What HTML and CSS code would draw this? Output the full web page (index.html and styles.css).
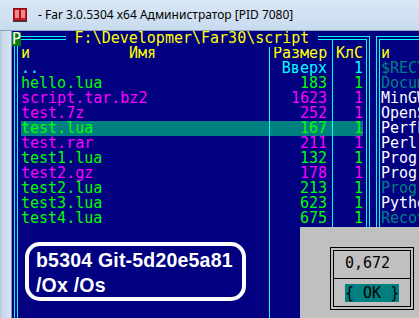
FILE: index.html
```html
<!DOCTYPE html>
<html>
<head>
<meta charset="utf-8">
<link rel="stylesheet" href="styles.css">
</head>
<body>
<div class="window">
  <div class="titlebar">
    <svg class="app-icon" width="14" height="14" viewBox="0 0 14 14">
      <rect x="0.5" y="0.5" width="13" height="12" fill="#d4151b" stroke="#8a0a0e"/>
      <rect x="0" y="12" width="14" height="2" fill="#5a2a2a"/>
      <path d="M2 3h4M2 5h4M2 7h4M2 9h4M8 3h4M8 5h4M8 7h4M8 9h4" stroke="#fff" stroke-width="1"/>
      <path d="M7 1v11" stroke="#8a0a0e"/>
    </svg>
    <span class="title-text">- Far 3.0.5304 x64 Администратор [PID 7080]</span>
  </div>
  <div class="client">
    <div class="frame-left"></div>
    <div class="console">
      <div class="panels">
        <div class="panel panel-left">
          <div class="panel-title"><span class="path"> F:\Developmer\Far30\script </span></div>
          <span class="mode-badge">P</span>
          <div class="panel-box">
            <div class="row row-top"><i></i><b class="sep"></b><i></i><b class="sep"></b><i></i></div>
            <div class="row hdr"><span class="name"><span class="sort">и</span><span class="colname">Имя</span></span><b class="sep"></b><span class="size">Размер</span><b class="sep"></b><span class="cnt">КлС</span></div>
            <div class="row c-cyan"><span class="name">..</span><b class="sep"></b><span class="size">Вверх</span><b class="sep"></b><span class="cnt">1</span></div>
            <div class="row c-green"><span class="name">hello.lua</span><b class="sep"></b><span class="size">183</span><b class="sep"></b><span class="cnt">1</span></div>
            <div class="row c-mag"><span class="name">script.tar.bz2</span><b class="sep"></b><span class="size">1623</span><b class="sep"></b><span class="cnt">1</span></div>
            <div class="row c-mag"><span class="name">test.7z</span><b class="sep"></b><span class="size">252</span><b class="sep"></b><span class="cnt">1</span></div>
            <div class="row c-green selected"><span class="name">test.lua</span><b class="sep"></b><span class="size">167</span><b class="sep"></b><span class="cnt">1</span></div>
            <div class="row c-mag"><span class="name">test.rar</span><b class="sep"></b><span class="size">211</span><b class="sep"></b><span class="cnt">1</span></div>
            <div class="row c-green"><span class="name">test1.lua</span><b class="sep"></b><span class="size">132</span><b class="sep"></b><span class="cnt">1</span></div>
            <div class="row c-mag"><span class="name">test2.gz</span><b class="sep"></b><span class="size">178</span><b class="sep"></b><span class="cnt">1</span></div>
            <div class="row c-green"><span class="name">test2.lua</span><b class="sep"></b><span class="size">213</span><b class="sep"></b><span class="cnt">1</span></div>
            <div class="row c-green"><span class="name">test3.lua</span><b class="sep"></b><span class="size">623</span><b class="sep"></b><span class="cnt">1</span></div>
            <div class="row c-green"><span class="name">test4.lua</span><b class="sep"></b><span class="size">675</span><b class="sep"></b><span class="cnt">1</span></div>
            <div class="row row-fill"><i></i><b class="sep"></b><i></i><b class="sep"></b><i></i></div>
          </div>
        </div>
        <div class="panel panel-right">
          <div class="panel-box">
            <div class="row-r row-top-r"></div>
            <div class="row-r hdr">и</div>
            <div class="row-r c-teal">$RECYCLE.BIN</div>
            <div class="row-r c-teal">Documents and Settings</div>
            <div class="row-r c-white">MinGW</div>
            <div class="row-r c-white">OpenSSL</div>
            <div class="row-r c-white">PerfLogs</div>
            <div class="row-r c-white">Perl</div>
            <div class="row-r c-white">Program Files</div>
            <div class="row-r c-white">Program Files (x86)</div>
            <div class="row-r c-teal">ProgramData</div>
            <div class="row-r c-white">Python</div>
            <div class="row-r c-teal">Recovery</div>
          </div>
        </div>
      </div>
      <div class="badge">b5304 Git-5d20e5a81<br>/Ox /Os</div>
      <div class="dialog">
        <div class="dlg-frame">
          <div class="dlg-text">0,672</div>
          <div class="dlg-line"></div>
          <div class="dlg-buttons"><span class="btn">{ OK }</span></div>
        </div>
      </div>
    </div>
  </div>
</div>
</body>
</html>
```

FILE: styles.css
```css
html, body {
  margin: 0;
  padding: 0;
  background: #cddff1;
}
.window {
  width: 419px;
  height: 318px;
  overflow: hidden;
  display: flex;
  flex-direction: column;
  background: linear-gradient(90deg, #c9dcef 0%, #d3e3f3 60%, #dbe9f6 100%);
}
.titlebar {
  height: 31px;
  flex: none;
  display: flex;
  align-items: center;
  padding-left: 13px;
  box-sizing: border-box;
  border-bottom: 1px solid #8ea4bd;
  background: linear-gradient(180deg, #d9e7f5 0%, #c8dbef 100%);
}
.app-icon {
  display: block;
  margin-top: -1px;
  flex: none;
}
.title-text {
  margin-left: 11px;
  font-family: "Noto Sans", "DejaVu Sans", sans-serif;
  font-size: 12px;
  color: #000;
  white-space: nowrap;
  margin-top: -1px;
}
.client {
  flex: 1;
  display: flex;
  min-height: 0;
}
.frame-left {
  width: 11px;
  flex: none;
  border-right: 1px solid #8797aa;
  background: linear-gradient(90deg, #b4c5d9 0px, #c9d9eb 2px, #d4e2f1 10px);
}
.console {
  flex: 1;
  position: relative;
  background: #000080;
  overflow: hidden;
  font-family: "DejaVu Sans Mono", monospace;
  font-size: 15px;
  line-height: 15px;
}
.panels {
  display: flex;
  width: 720px;
}
.panel {
  width: 360px;
  flex: none;
  position: relative;
  padding: 5px 2px 0 2px;
  box-sizing: border-box;
  height: 300px;
}
.panel-box {
  border: 4px double #00ffff;
  border-bottom: none;
  padding: 0 3px 0 3px;
  height: 100%;
  box-sizing: border-box;
}
.panel-right {
  padding-left: 4px;
}
.panel-right .panel-box {
  padding-left: 1px;
}
.panel-title {
  position: absolute;
  top: 0;
  left: 0;
  right: 0;
  height: 15px;
  text-align: center;
  color: #ffff00;
}
.panel-title .path {
  background: #000080;
  white-space: pre;
}
.mode-badge {
  position: absolute;
  left: 0;
  top: 1px;
  width: 9px;
  height: 14px;
  line-height: 14px;
  background: #0b7a0b;
  color: #ffffff;
  text-align: center;
}
.row {
  display: grid;
  grid-template-columns: 243px 9px 54px 9px 27px;
  height: 15px;
}
.row-top { height: 6px; }
.row-fill { height: 200px; }
.sep {
  background: linear-gradient(#00ffff, #00ffff) 5px 0 / 1px 100% no-repeat;
}
.name, .size, .cnt, .row-r, .dlg-text, .btn {
  white-space: pre;
}
.name { overflow: hidden; }
.size, .cnt { text-align: right; }
.hdr { color: #ffff00; }
.hdr .name { display: block; position: relative; }
.hdr .colname {
  position: absolute;
  left: 108px;
}
.c-cyan { color: #00ffff; }
.c-green { color: #00ff00; }
.c-mag { color: #ff00ff; }
.c-white { color: #ffffff; }
.c-teal { color: #008080; }
.selected { background: #008080; }
.row-r { height: 15px; }
.row-top-r { height: 6px; }
.badge {
  position: absolute;
  left: 13px;
  top: 211px;
  width: 221px;
  height: 59px;
  box-sizing: border-box;
  border: 4px solid #fff;
  border-radius: 15px;
  padding: 2px 0 0 7px;
  color: #fff;
  font-family: "Liberation Sans", Arial, sans-serif;
  font-weight: bold;
  font-size: 19.5px;
  letter-spacing: 0.2px;
  line-height: 25px;
}
.dialog {
  position: absolute;
  left: 288px;
  top: 196px;
  width: 144px;
  height: 120px;
  background: #c0c0c0;
  padding: 20px 0 0 30px;
  box-sizing: border-box;
}
.dlg-frame {
  border: 4px double #000;
  width: 84px;
  height: 63px;
  padding-top: 5px;
  box-sizing: border-box;
}
.dlg-text {
  color: #000;
  height: 15px;
  padding-left: 11px;
}
.dlg-line {
  height: 15px;
  background: linear-gradient(#000, #000) 0 7px / 100% 1px no-repeat;
}
.dlg-buttons {
  height: 15px;
  padding-left: 11px;
}
.btn {
  background: #008080;
  color: #000;
}
```
